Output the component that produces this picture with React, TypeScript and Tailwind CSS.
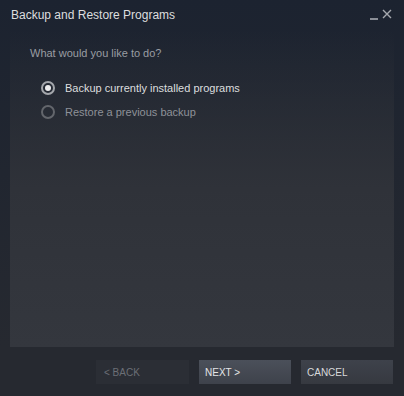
export default function App() {
  return (
    <div
      className="w-[404px] h-[396px] flex flex-col bg-[#262930] text-[#c6c8cc] overflow-hidden"
      style={{ fontFamily: '"Liberation Sans", Arial, sans-serif' }}
    >
      <div className="bg-gradient-to-b from-[#1c2330] to-[#262930] flex flex-col h-[347px]">
        {/* title bar */}
        <div className="flex items-center h-[30px] pl-[11px] pr-[12px]">
          <span className="text-[12px] text-[#dcdedf] flex-1">Backup and Restore Programs</span>
          <div className="flex items-end gap-[4px]">
            <span className="block w-[8px] h-[2px] bg-[#8a8e96] mb-[1px]" />
            <svg width="10" height="10" viewBox="0 0 10 10" className="mb-[2px]">
              <path d="M1 1 L9 9 M9 1 L1 9" stroke="#a6a9ae" strokeWidth="1.4" />
            </svg>
          </div>
        </div>

        {/* panel */}
        <div className="flex-1 mx-[10px] bg-gradient-to-b from-[#32353c]/0 via-[#2f3239] to-[#34373e] flex flex-col pl-[20px] pt-[16px]">
          <p className="text-[11px] text-[#9a9da3] leading-[14px]">What would you like to do?</p>
          <div className="flex flex-col gap-[10px] mt-[21px] pl-[11px]">
            <label className="flex items-center gap-[10px] h-[14px]">
              <span className="w-[14px] h-[14px] rounded-full border-[2px] border-[#a3a6ab] flex items-center justify-center">
                <span className="w-[6px] h-[6px] rounded-full bg-[#ececed]" />
              </span>
              <span className="text-[11px] leading-[14px] text-[#dcdedf]">Backup currently installed programs</span>
            </label>
            <label className="flex items-center gap-[10px] h-[14px]">
              <span className="w-[14px] h-[14px] rounded-full border-[2px] border-[#63666c]" />
              <span className="text-[11px] leading-[14px] text-[#8e9198]">Restore a previous backup</span>
            </label>
          </div>
        </div>
      </div>

      {/* buttons */}
      <div className="flex justify-end gap-[10px] pr-[11px] pt-[13px]">
        <button className="w-[93px] h-[24px] bg-[#2b2e35] text-left pl-[8px] text-[10px] text-[#6c6f76]">&lt; BACK</button>
        <button className="w-[92px] h-[24px] bg-gradient-to-b from-[#4b505a] to-[#3e424b] text-left pl-[6px] text-[10px] text-[#e4e5e7]">NEXT &gt;</button>
        <button className="w-[92px] h-[24px] bg-gradient-to-b from-[#3e424b] to-[#363940] text-left pl-[6px] text-[10px] text-[#d8d9db]">CANCEL</button>
      </div>
    </div>
  )
}
